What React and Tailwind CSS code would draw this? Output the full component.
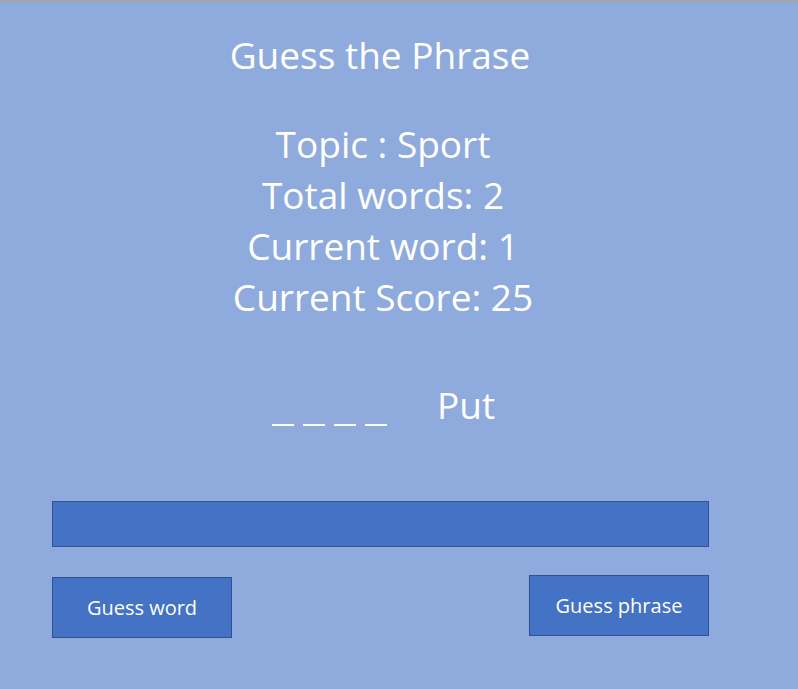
// Guess the Phrase — game screen mockup.

const STATS = ["Topic : Sport", "Total words: 2", "Current word: 1", "Current Score: 25"];

function App() {
  return (
    <div className="flex h-[689px] w-[798px] flex-col border-t-2 border-[#a6a6a6] bg-[#8faadc] font-['Open_Sans',sans-serif] text-white">
      <h1 className="mt-[29px] pr-[38px] text-center text-[37px] leading-[48px]">Guess the Phrase</h1>

      <div className="mt-[39px] flex flex-col items-center pr-[32px] text-[37px] leading-[51px]">
        {STATS.map((line) => (
          <p key={line}>{line}</p>
        ))}
      </div>

      {/* letter blanks for the current word, then the revealed word */}
      <div className="mt-[63px] flex h-[40px] items-start">
        <div className="ml-[272px] mt-[39px] flex gap-[9px]">
          {[0, 1, 2, 3].map((i) => (
            <span key={i} className="h-[2px] w-[22px] bg-white" />
          ))}
        </div>
        <span className="ml-[50px] text-[37px] leading-[40px]">Put</span>
      </div>

      <div className="ml-[52px] mt-[76px] flex w-[657px] flex-col">
        <div className="h-[46px] border border-[#2f528f] bg-[#4472c4]" />
        <div className="mt-[28px] flex items-start justify-between">
          <button type="button" className="mt-[2px] h-[61px] w-[180px] border border-[#2f528f] bg-[#4472c4] text-[20px] text-white">
            Guess word
          </button>
          <button type="button" className="h-[61px] w-[180px] border border-[#2f528f] bg-[#4472c4] text-[20px] text-white">
            Guess phrase
          </button>
        </div>
      </div>
    </div>
  );
}

export default App;
